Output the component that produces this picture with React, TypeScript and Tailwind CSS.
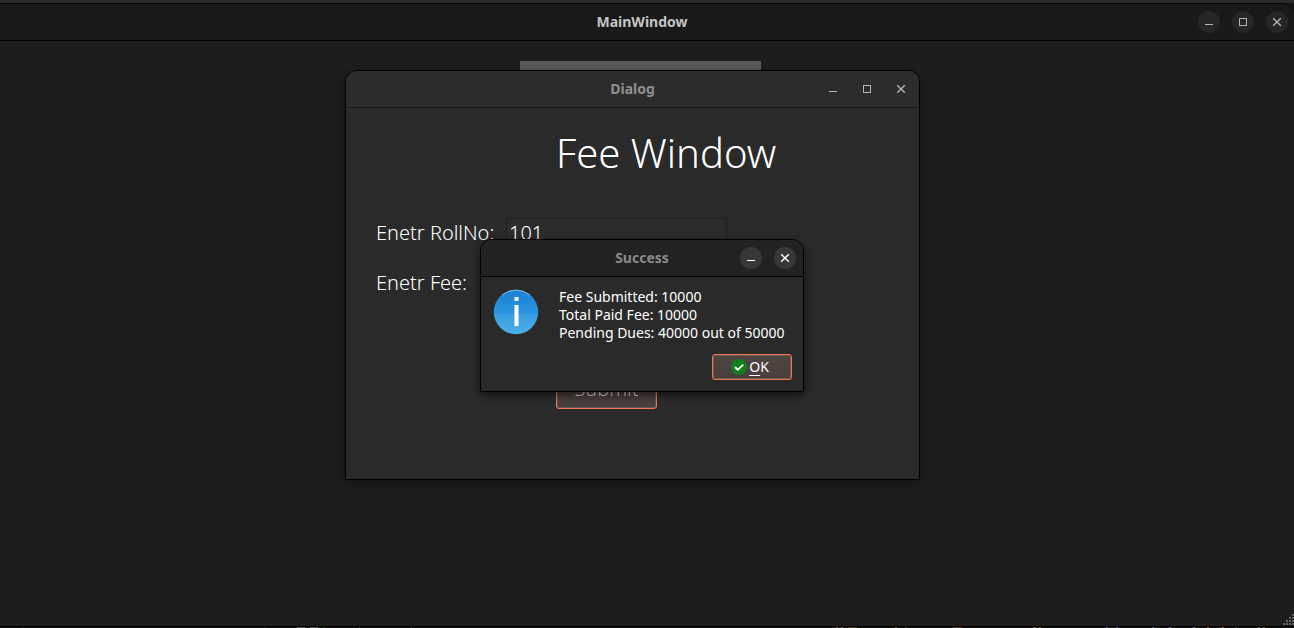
import type { ReactNode } from "react";

type GlyphKind = "minimize" | "maximize" | "close";

function Glyph({ kind }: { kind: GlyphKind }) {
  return (
    <svg width="10" height="10" viewBox="0 0 10 10" fill="none" stroke="currentColor" aria-hidden="true">
      {kind === "minimize" && <path d="M1 7.5h8" />}
      {kind === "maximize" && <rect x="1.5" y="1.5" width="7" height="7" />}
      {kind === "close" && <path d="M1.200 1.200l7.600 7.600M8.800 1.200l-7.600 7.600" strokeWidth="1.4" />}
    </svg>
  );
}

function WindowButton({ kind, className = "" }: { kind: GlyphKind; className?: string }) {
  return (
    <button
      type="button"
      aria-label={kind}
      className={`flex size-[22px] items-center justify-center rounded-full ${className}`}
    >
      <Glyph kind={kind} />
    </button>
  );
}

function TitleBar({ title, className, children }: { title: string; className: string; children: ReactNode }) {
  return (
    <header className={`grid h-[37px] grid-cols-[1fr_auto_1fr] items-center border-b ${className}`}>
      <h2 className="col-start-2 text-[14px] leading-5 font-bold">{title}</h2>
      <div className="flex justify-end gap-3">{children}</div>
    </header>
  );
}

function InfoIcon() {
  return (
    <svg width="46" height="48" viewBox="0 -1 46 48" className="shrink-0" aria-hidden="true">
      <defs>
        <linearGradient id="info-top" x1="0" y1="0" x2="0" y2="1">
          <stop offset="0" stopColor="#1a7fd4" />
          <stop offset="1" stopColor="#2b95df" />
        </linearGradient>
        <linearGradient id="info-bottom" x1="0" y1="0" x2="0" y2="1">
          <stop offset="0" stopColor="#389fe2" />
          <stop offset="1" stopColor="#4caee8" />
        </linearGradient>
        <clipPath id="info-disc">
          <circle cx="23" cy="23" r="22.200" />
        </clipPath>
      </defs>
      <g clipPath="url(#info-disc)">
        <path d="M0 0h46v25H0z" fill="url(#info-top)" />
        <path d="M0 25h46v21H0z" fill="url(#info-bottom)" />
      </g>
      <path d="M9 6.200a21.800 21.800 0 0 1 28 0" fill="none" stroke="#7fbcee" />
      <path d="M21.500 8h4v4h-4zM21.500 16h4v21h-4z" fill="#fff" />
    </svg>
  );
}

function CheckBadge() {
  return (
    <svg width="16" height="16" viewBox="0 0 16 16" aria-hidden="true">
      <circle cx="8" cy="8" r="8" fill="#12801f" />
      <path d="M4 8l2.800 2.800L12.200 5.600" fill="none" stroke="#fff" strokeWidth="1.800" />
    </svg>
  );
}

function ResizeGrip() {
  return (
    <svg width="12" height="12" viewBox="0 0 12 12" className="self-end" aria-hidden="true">
      <path
        d="M10 0h2v2h-2zM7 3h2v2H7zM10 3h2v2h-2zM4 6h2v2H4zM7 6h2v2H7zM10 6h2v2h-2zM1 9h2v2H1zM4 9h2v2H4zM7 9h2v2H7zM10 9h2v2h-2z"
        fill="#626262"
      />
    </svg>
  );
}

const backdropMarks: [number, number, string][] = [
  [23, 1, "#333333"],
  [264, 1, "#333333"],
  [297, 8, "#5a5a5a"],
  [310, 8, "#5a5a5a"],
  [323, 2, "#174a1b"],
  [359, 1, "#4a4a4a"],
  [411, 1, "#4a4a4a"],
  [836, 2, "#7a5127"],
  [841, 2, "#7a5127"],
  [848, 9, "#55391f"],
  [895, 2, "#7a5127"],
  [905, 2, "#55391f"],
  [953, 9, "#55391f"],
  [1033, 3, "#7a5127"],
  [1039, 2, "#7a5127"],
  [1106, 2, "#46567c"],
  [1116, 2, "#46567c"],
  [1152, 2, "#46567c"],
  [1169, 2, "#46567c"],
  [1193, 2, "#46567c"],
  [1207, 2, "#7a5a3a"],
  [1222, 2, "#7a5a3a"],
  [1236, 1, "#7a5a3a"],
  [1258, 2, "#7a5127"],
  [1263, 2, "#7a5127"],
];

function Backdrop() {
  return (
    <svg className="h-px w-full" viewBox="0 0 1294 1" preserveAspectRatio="none" aria-hidden="true">
      {backdropMarks.map(([x, width, fill]) => (
        <rect key={x} x={x} y="0" width={width} height="1" fill={fill} />
      ))}
    </svg>
  );
}

function FeeDialog() {
  return (
    <section
      aria-label="Dialog"
      className="absolute top-[70px] left-[345px] w-[575px] overflow-hidden rounded-t-xl border border-black bg-[#2a2a2a] shadow-[0_2px_8px_rgba(0,0,0,0.4)]"
    >
      <TitleBar title="Dialog" className="border-[#191919] bg-[#2c2c2c] px-[7px] text-[#8f8f8f]">
        <WindowButton kind="minimize" className="text-[#b4b4b4]" />
        <WindowButton kind="maximize" className="text-[#b4b4b4]" />
        <WindowButton kind="close" className="text-[#b4b4b4]" />
      </TitleBar>
      <form className="px-[30px] pt-5 pb-[70px]" onSubmit={(event) => event.preventDefault()}>
        <h1 className="pl-[180px] text-[40px] leading-[50px] font-[350]">Fee Window</h1>
        <div className="mt-10 grid grid-cols-[120px_221px] items-center gap-x-2.5 gap-y-5 text-[20px] leading-[30px] font-[350]">
          <label htmlFor="roll-no" className="whitespace-nowrap">Enetr RollNo:</label>
          <input
            id="roll-no"
            defaultValue="101"
            className="h-[30px] w-full rounded-[3px] border border-[#1f1f1f] bg-[#2c2c2c] px-0.5 outline-none"
          />
          <label htmlFor="fee" className="whitespace-nowrap">Enetr Fee:</label>
          <input
            id="fee"
            className="h-[30px] w-full rounded-[3px] border border-[#1f1f1f] bg-[#2c2c2c] px-0.5 outline-none"
          />
        </div>
        <button
          type="submit"
          className="mt-[70px] ml-[180px] flex h-[41px] w-[101px] items-center justify-center rounded-[3px] border border-[#f0784f] bg-[#483e3b] text-[20px] leading-[30px] font-[350] text-[#d4d4d4] inset-ring inset-ring-[#5c5350]"
        >
          Submit
        </button>
      </form>
    </section>
  );
}

function SuccessMessage() {
  return (
    <section
      role="dialog"
      aria-label="Success"
      className="absolute top-[239px] left-[480px] w-[324px] overflow-hidden rounded-t-xl border border-black bg-[#2a2a2a] shadow-[0_3px_9px_rgba(0,0,0,0.6)]"
    >
      <TitleBar title="Success" className="border-black bg-[#222222] px-[7px] text-[#8a8a8a]">
        <WindowButton kind="minimize" className="bg-[#373737] text-white" />
        <WindowButton kind="close" className="bg-[#373737] text-white" />
      </TitleBar>
      <div className="flex flex-col gap-3 px-[11px] py-[11px]">
        <div className="flex gap-5 pl-px">
          <InfoIcon />
          <p className="text-[14px] leading-[18px] whitespace-nowrap">
            Fee Submitted: 10000
            <br />
            Total Paid Fee: 10000
            <br />
            Pending Dues: 40000 out of 50000
          </p>
        </div>
        <button
          type="button"
          className="flex h-[26px] w-20 items-center justify-center gap-0.5 self-end rounded-[3px] border border-[#f0784f] bg-linear-to-b from-[#504542] to-[#483e3b] pr-1 text-[14px] leading-[18px] inset-ring inset-ring-[#655a57]"
        >
          <CheckBadge />
          <span>
            <span className="underline underline-offset-[3px]">O</span>K
          </span>
        </button>
      </div>
    </section>
  );
}

export default function App() {
  return (
    <div className="relative flex min-h-screen flex-col overflow-hidden bg-[#131313] font-['Noto_Sans','Open_Sans',sans-serif] text-white">
      <div className="h-[3px] w-full bg-[#2a2a2a]" />
      <main className="-ml-2.5 flex grow flex-col rounded-tr-xl border-y border-black bg-[#1d1d1d]">
        <TitleBar title="MainWindow" className="rounded-tr-xl border-black bg-[#191919] px-1.5 text-[#c4c4c4]">
          <WindowButton kind="minimize" className="bg-[#262626] text-[#b4b4b4]" />
          <WindowButton kind="maximize" className="bg-[#262626] text-[#b4b4b4]" />
          <WindowButton kind="close" className="bg-[#262626] text-[#b4b4b4]" />
        </TitleBar>
        <div className="flex grow flex-col justify-between pt-5 pl-2.5">
          <div className="ml-[520px] h-10 w-[241px] bg-[#5a5a5a]" />
          <ResizeGrip />
        </div>
      </main>
      <Backdrop />
      <FeeDialog />
      <SuccessMessage />
    </div>
  );
}
